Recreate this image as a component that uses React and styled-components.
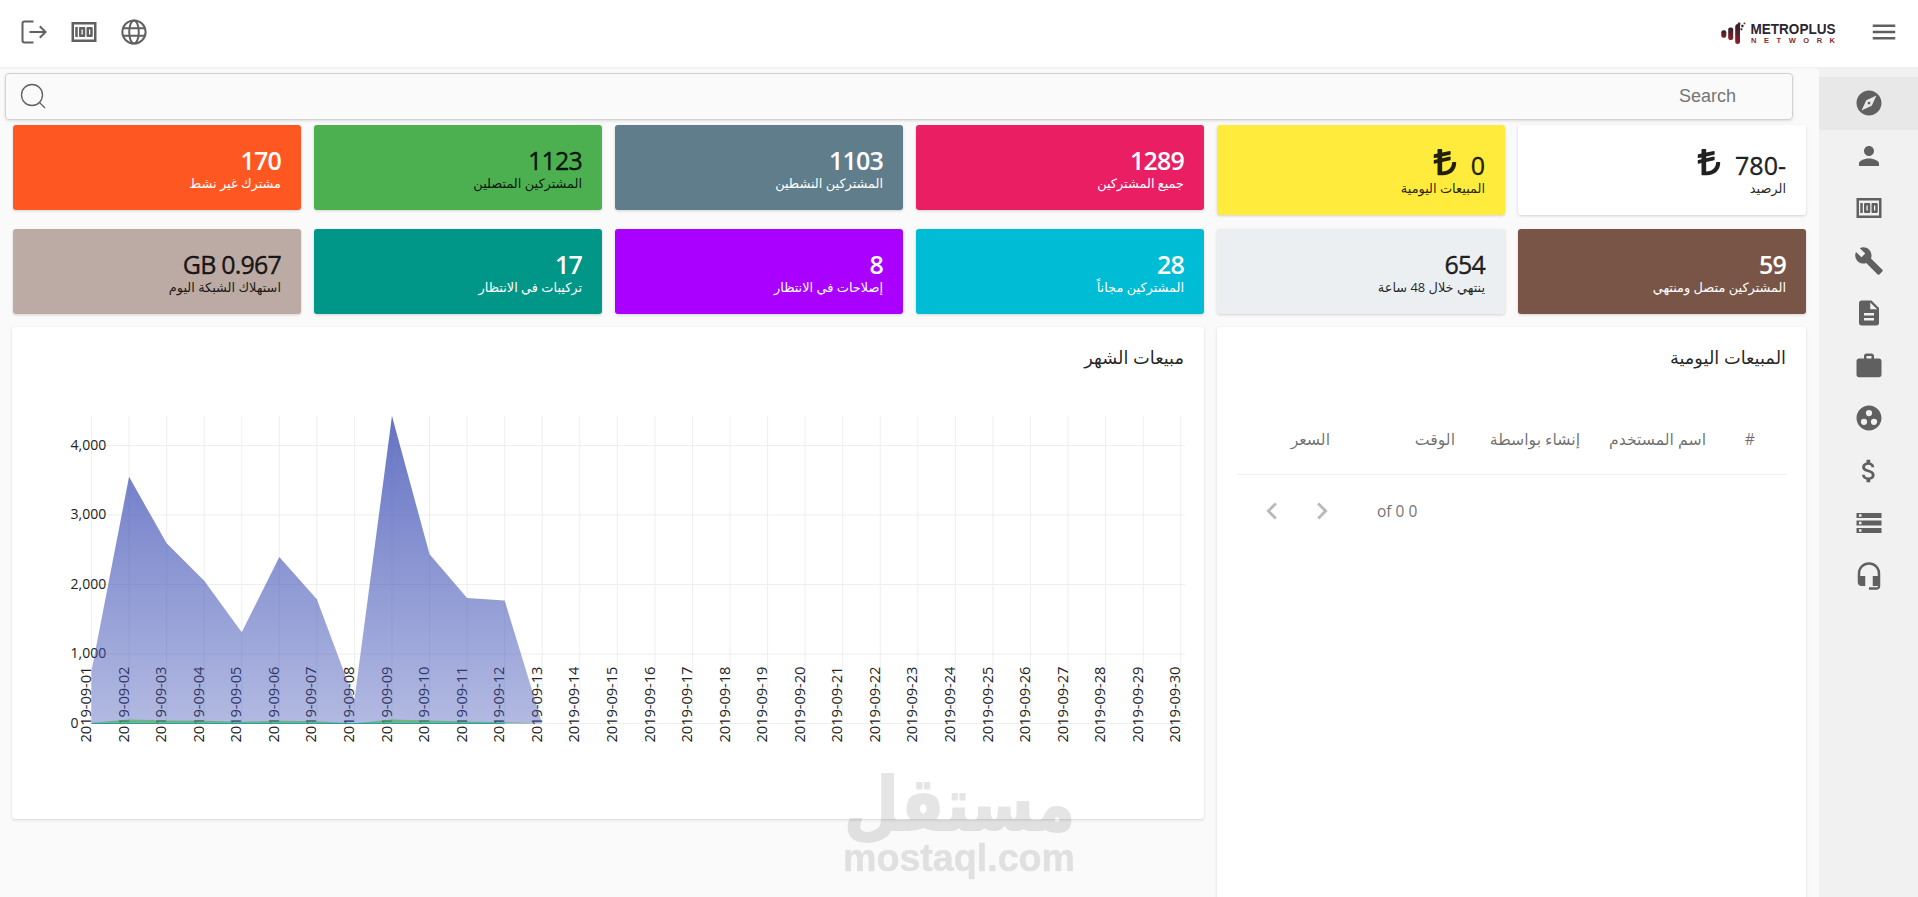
import React from 'react';
import styled, { createGlobalStyle } from 'styled-components';
import {
  MdAttachMoney, MdBuild, MdChevronLeft, MdChevronRight, MdDescription, MdExplore, MdGroupWork,
  MdHeadsetMic, MdMenu, MdMoney, MdPerson, MdStorage, MdWork,
} from 'react-icons/md';
import { FaLiraSign } from 'react-icons/fa';

const dark = 'rgba(0, 0, 0, .87)';

const stats = [
  { value: '-780', label: 'الرصيد', color: '#fff', text: dark, lira: true, weight: 500 },
  { value: '0', label: 'المبيعات اليومية', color: '#ffeb3b', text: dark, lira: true, weight: 500 },
  { value: '1289', label: 'جميع المشتركين', color: '#e91e63', text: '#fff', weight: 600 },
  { value: '1103', label: 'المشتركين النشطين', color: '#607d8b', text: '#fff', weight: 600 },
  { value: '1123', label: 'المشتركين المتصلين', color: '#4caf50', text: dark, weight: 500 },
  { value: '170', label: 'مشترك غير نشط', color: '#ff5722', text: '#fff', weight: 600 },
  { value: '59', label: 'المشتركين متصل ومنتهي', color: '#795548', text: '#fff', weight: 600 },
  { value: '654', label: 'ينتهي خلال 48 ساعة', color: '#eceff1', text: dark, weight: 500 },
  { value: '28', label: 'المشتركين مجاناً', color: '#00bcd4', text: '#fff', weight: 600 },
  { value: '8', label: 'إصلاحات في الانتظار', color: '#aa00ff', text: '#fff', weight: 600 },
  { value: '17', label: 'تركيبات في الانتظار', color: '#009688', text: '#fff', weight: 600 },
  { value: '0.967 GB', label: 'استهلاك الشبكة اليوم', color: '#bcaaa4', text: dark, weight: 500 },
];

const menuItems = [
  MdExplore, MdPerson, MdMoney, MdBuild, MdDescription, MdWork, MdGroupWork, MdAttachMoney, MdStorage, MdHeadsetMic,
];

// Sales per day of the month, the rest of the month has no data yet
const sales = [760, 3550, 2592, 2055, 1312, 2395, 1787, 340, 4424, 2434, 1806, 1768, 0];
const active = [10, 58, 44, 40, 26, 40, 34, 4, 58, 44, 28, 18, 0];
const days = Array.from({ length: 30 }, (unused, i) => `2019-09-${String(i + 1).padStart(2, '0')}`);

const chartX = (i) => 79.5 + i * 37.56;
const chartY = (value) => 396.5 - value * 0.0695;
const areaPath = (values) => {
  const top = values.map((value, i) => `L${chartX(i)} ${chartY(value)}`).join('');
  return `M${chartX(0)} ${chartY(0)}${top}L${chartX(values.length - 1)} ${chartY(0)}Z`;
};

function SalesChart () {
  return (
    <ChartSvg viewBox="0 0 1192 492">
      <defs>
        <linearGradient id="salesFill" x1="0" y1="0" x2="0" y2="1">
          <stop offset="0" stopColor="#3f51b5" stopOpacity="0.8" />
          <stop offset="1" stopColor="#3f51b5" stopOpacity="0.4" />
        </linearGradient>
      </defs>
      {days.map((day, i) => (
        <GridLine key={day} x1={chartX(i)} x2={chartX(i)} y1="89" y2="396.5" />
      ))}
      {[0, 1000, 2000, 3000, 4000].map((value) => (
        <g key={value}>
          <GridLine x1="79" x2="1173" y1={chartY(value)} y2={chartY(value)} />
          <AxisText x="58.5" y={chartY(value) + 4}>{value.toLocaleString('en-US')}</AxisText>
        </g>
      ))}
      {days.map((day, i) => (
        <DayText key={day} transform={`translate(${chartX(i) - 0.4} 415.5) rotate(-90)`} textLength="76">
          {day}
        </DayText>
      ))}
      <path d={areaPath(sales)} fill="url(#salesFill)" />
      <path d={areaPath(active)} fill="#4caf50" fillOpacity="0.65" />
      <path d={`M${chartX(0)} 396.5H${chartX(11)}`} stroke="#26a0b5" strokeWidth="1" />
    </ChartSvg>
  );
}

function Logo () {
  return (
    <LogoSvg viewBox="0 0 118 28">
      <defs>
        <linearGradient id="logoBar" x1="0" y1="0" x2="0" y2="1">
          <stop offset="0" stopColor="#2c2230" />
          <stop offset="1" stopColor="#8f1f24" />
        </linearGradient>
      </defs>
      <rect x="1.3" y="10.2" width="5" height="7.6" rx="2" fill="url(#logoBar)" />
      <rect x="8.2" y="7.5" width="5" height="12.5" rx="2" fill="url(#logoBar)" />
      <path d="M15.2 7Q15.2 4 18 4H20V22Q20 24 17.6 24T15.2 22Z" fill="url(#logoBar)" />
      <rect x="17.8" y="2.4" width="2.6" height="2.6" rx="0.6" fill="#4b2830" />
      <rect x="21.3" y="4.8" width="2.2" height="2.4" rx="0.6" fill="#30232d" />
      <rect x="23.6" y="2.4" width="1.8" height="1.8" rx="0.5" fill="#6a3338" />
      <rect x="20.4" y="8.2" width="2" height="2" rx="0.5" fill="#4b2830" />
      <LogoName x="30.5" y="13.8" textLength="85" lengthAdjust="spacingAndGlyphs">METROPLUS</LogoName>
      <LogoSub x="31" y="23" textLength="84">NETWORK</LogoSub>
    </LogoSvg>
  );
}

export default function App () {
  return (
    <PageWrapper dir="rtl">
      <GlobalStyle />
      <Header>
        <HeaderGroup>
          <MdMenu size={30} />
          <Logo />
        </HeaderGroup>
        <HeaderActions>
          <ActionSvg viewBox="0 0 30 30">
            <circle cx="15" cy="15" r="11.6" />
            <ellipse cx="15" cy="15" rx="4.8" ry="11.6" />
            <path d="M4 11.2H26M4 18.8H26" />
          </ActionSvg>
          <MdMoney size={30} />
          <ActionSvg viewBox="0 0 30 30">
            <path d="M14.5 4.5H5.5Q3.5 4.5 3.5 6.5V23.5Q3.5 25.5 5.5 25.5H14.5M10.5 15H26.5M20.8 9.3L26.5 15L20.8 20.7" />
          </ActionSvg>
        </HeaderActions>
      </Header>
      <Body>
        <Sidebar>
          {menuItems.map((Icon, i) => (
            <MenuItem key={i} $active={i === 0}>
              <Icon size={30} />
            </MenuItem>
          ))}
        </Sidebar>
        <Main>
          <SearchBar>
            <SearchText>Search</SearchText>
            <SearchSvg viewBox="0 0 30 30">
              <circle cx="13" cy="13" r="10.5" />
              <path d="M20.5 20.5L26 26" />
            </SearchSvg>
          </SearchBar>
          <StatsGrid>
            {stats.map((stat) => (
              <StatCard key={stat.label} $color={stat.color} $text={stat.text} $tall={stat.lira}>
                <StatValue $weight={stat.weight} $tall={stat.lira}>
                  {stat.value}
                  {stat.lira && <LiraIcon size={30} />}
                </StatValue>
                <StatLabel>{stat.label}</StatLabel>
              </StatCard>
            ))}
          </StatsGrid>
          <Panels>
            <Panel $tall>
              <PanelTitle>المبيعات اليومية</PanelTitle>
              <TableHead>
                <span>#</span>
                <span>اسم المستخدم</span>
                <span>إنشاء بواسطة</span>
                <span>الوقت</span>
                <span>السعر</span>
              </TableHead>
              <Pagination>
                <PageCount>0 of 0</PageCount>
                <MdChevronRight size={34} />
                <MdChevronLeft size={34} />
              </Pagination>
            </Panel>
            <Panel>
              <PanelTitle>مبيعات الشهر</PanelTitle>
              <SalesChart />
            </Panel>
          </Panels>
        </Main>
      </Body>
      <Watermark viewBox="0 0 240 120">
        <WatermarkArabic x="234" y="64" textLength="231" lengthAdjust="spacingAndGlyphs">مستقل</WatermarkArabic>
        <WatermarkLatin x="2" y="105" textLength="232" lengthAdjust="spacingAndGlyphs">mostaql.com</WatermarkLatin>
      </Watermark>
    </PageWrapper>
  );
}

const GlobalStyle = createGlobalStyle`
  * {
    box-sizing: border-box;
  }
  body {
    background-color: #fafafa;
    font-family: "Open Sans", "DejaVu Sans", sans-serif;
    margin: 0;
    overflow: hidden;
  }
`;

const PageWrapper = styled.div`
  color: ${dark};
  display: flex;
  flex-direction: column;
  height: 100vh;
  overflow: hidden;
`;

const Header = styled.header`
  align-items: center;
  background-color: #fff;
  box-shadow: 0 1px 3px rgba(0, 0, 0, .06);
  color: #606060;
  display: flex;
  flex: none;
  height: 67px;
  justify-content: space-between;
  padding: 0 19px 3px;
`;

const HeaderGroup = styled.div`
  align-items: center;
  display: flex;
  gap: 31px;
`;

const HeaderActions = styled.div`
  display: flex;
  gap: 20px;
`;

const ActionSvg = styled.svg`
  fill: none;
  height: 30px;
  stroke: currentColor;
  stroke-width: 2;
  width: 30px;
`;

const LogoSvg = styled.svg`
  direction: ltr;
  height: 28px;
  margin-top: 4px;
  overflow: visible;
  width: 118px;
`;

const LogoName = styled.text`
  fill: #2b2630;
  font-family: "Liberation Sans", sans-serif;
  font-size: 14.5px;
  font-weight: 700;
`;

const LogoSub = styled.text`
  fill: #8a2a2e;
  font-family: "Liberation Sans", sans-serif;
  font-size: 7.5px;
  font-weight: 700;
`;

const Body = styled.div`
  display: flex;
  flex: 1;
  min-height: 0;
`;

const Sidebar = styled.nav`
  background-color: #f1f1f1;
  flex: none;
  padding-top: 10px;
  width: 99px;
`;

const MenuItem = styled.div`
  align-items: center;
  background-color: ${({ $active }) => ($active ? '#e8e8e8' : 'transparent')};
  color: #606060;
  display: flex;
  height: 52.5px;
  justify-content: center;
`;

const Main = styled.main`
  flex: 1;
  min-width: 0;
`;

const SearchBar = styled.div`
  align-items: center;
  border: 1px solid #d2d2d2;
  border-radius: 4px;
  box-shadow: 0 1px 3px rgba(0, 0, 0, .12);
  display: flex;
  height: 47px;
  justify-content: space-between;
  margin: 6px 26px 5px 5px;
  padding: 0 56px 0 13px;
`;

const SearchText = styled.span`
  color: #757575;
  font-family: "Liberation Sans", sans-serif;
  font-size: 18px;
`;

const SearchSvg = styled.svg`
  fill: none;
  height: 30px;
  stroke: #606060;
  stroke-width: 1.3;
  width: 30px;
`;

const StatsGrid = styled.section`
  align-items: start;
  display: grid;
  gap: 14px 13px;
  grid-template-columns: repeat(6, 1fr);
  padding: 0 13px;
`;

const StatCard = styled.div`
  background-color: ${({ $color }) => $color};
  border-radius: 3px;
  box-shadow: 0 1px 3px rgba(0, 0, 0, .16);
  color: ${({ $text }) => $text};
  height: ${({ $tall }) => ($tall ? '90px' : '85px')};
  padding: 21px 20px 0;
`;

const StatValue = styled.div`
  align-items: ${({ $tall }) => ($tall ? 'flex-end' : 'stretch')};
  -webkit-text-stroke: ${({ $weight }) => ($weight === 500 ? '.4px' : '0')};
  display: flex;
  font-size: 25px;
  font-weight: ${({ $weight }) => $weight};
  gap: 11px;
  height: ${({ $tall }) => ($tall ? '33px' : '28px')};
  letter-spacing: ${({ $tall }) => ($tall ? '0' : '-.8px')};
  line-height: 28px;
`;

const LiraIcon = styled(FaLiraSign)`
  margin-bottom: 2px;
`;

const StatLabel = styled.div`
  font-size: 12.9px;
  line-height: 18px;
`;

const Panels = styled.section`
  align-items: start;
  display: grid;
  gap: 13px;
  grid-template-columns: 589px 1fr;
  padding: 13px 13px 0 12px;
`;

const Panel = styled.div`
  background-color: #fff;
  border-radius: 3px;
  box-shadow: 0 1px 3px rgba(0, 0, 0, .14);
  height: ${({ $tall }) => ($tall ? '640px' : '492px')};
`;

const PanelTitle = styled.h2`
  font-size: 17.8px;
  font-weight: 400;
  height: 60px;
  line-height: 60px;
  margin: 0 20px;
`;

const ChartSvg = styled.svg`
  direction: ltr;
  display: block;
  height: 492px;
  margin-top: -60px;
  width: 1192px;
`;

const GridLine = styled.line`
  stroke: #eee;
  stroke-width: 1;
`;

const AxisText = styled.text`
  fill: #222;
  font-size: 14px;
`;

const DayText = styled.text`
  fill: #222;
  font-size: 14.7px;
`;

const TableHead = styled.div`
  align-items: center;
  border-bottom: 1px solid #f0f0f0;
  color: rgba(0, 0, 0, .58);
  display: grid;
  font-size: 15.7px;
  grid-template-columns: 49px 126px 125px 125px 1fr;
  height: 70px;
  margin: 18px 20px 0;
  padding: 0 31px 2px 0;
`;

const Pagination = styled.div`
  align-items: center;
  color: #b9b9b9;
  display: flex;
  gap: 16px;
  height: 71px;
  justify-content: flex-end;
  padding-left: 38px;
`;

const PageCount = styled.span`
  color: #757575;
  font-size: 15.5px;
  margin-left: 22px;
`;

// Floats above the whole page
const Watermark = styled.svg`
  bottom: 11px;
  direction: ltr;
  fill: #000;
  height: 120px;
  left: 841px;
  opacity: .1;
  overflow: visible;
  pointer-events: none;
  position: fixed;
  width: 240px;
`;

const WatermarkArabic = styled.text`
  direction: rtl;
  font-family: "DejaVu Sans", sans-serif;
  font-size: 74px;
  font-weight: 700;
  stroke: #000;
  stroke-linejoin: round;
  stroke-width: 2;
`;

const WatermarkLatin = styled.text`
  font-family: "Liberation Sans", sans-serif;
  font-size: 38px;
  font-weight: 700;
  stroke: #000;
  stroke-linejoin: round;
  stroke-width: .6;
`;
